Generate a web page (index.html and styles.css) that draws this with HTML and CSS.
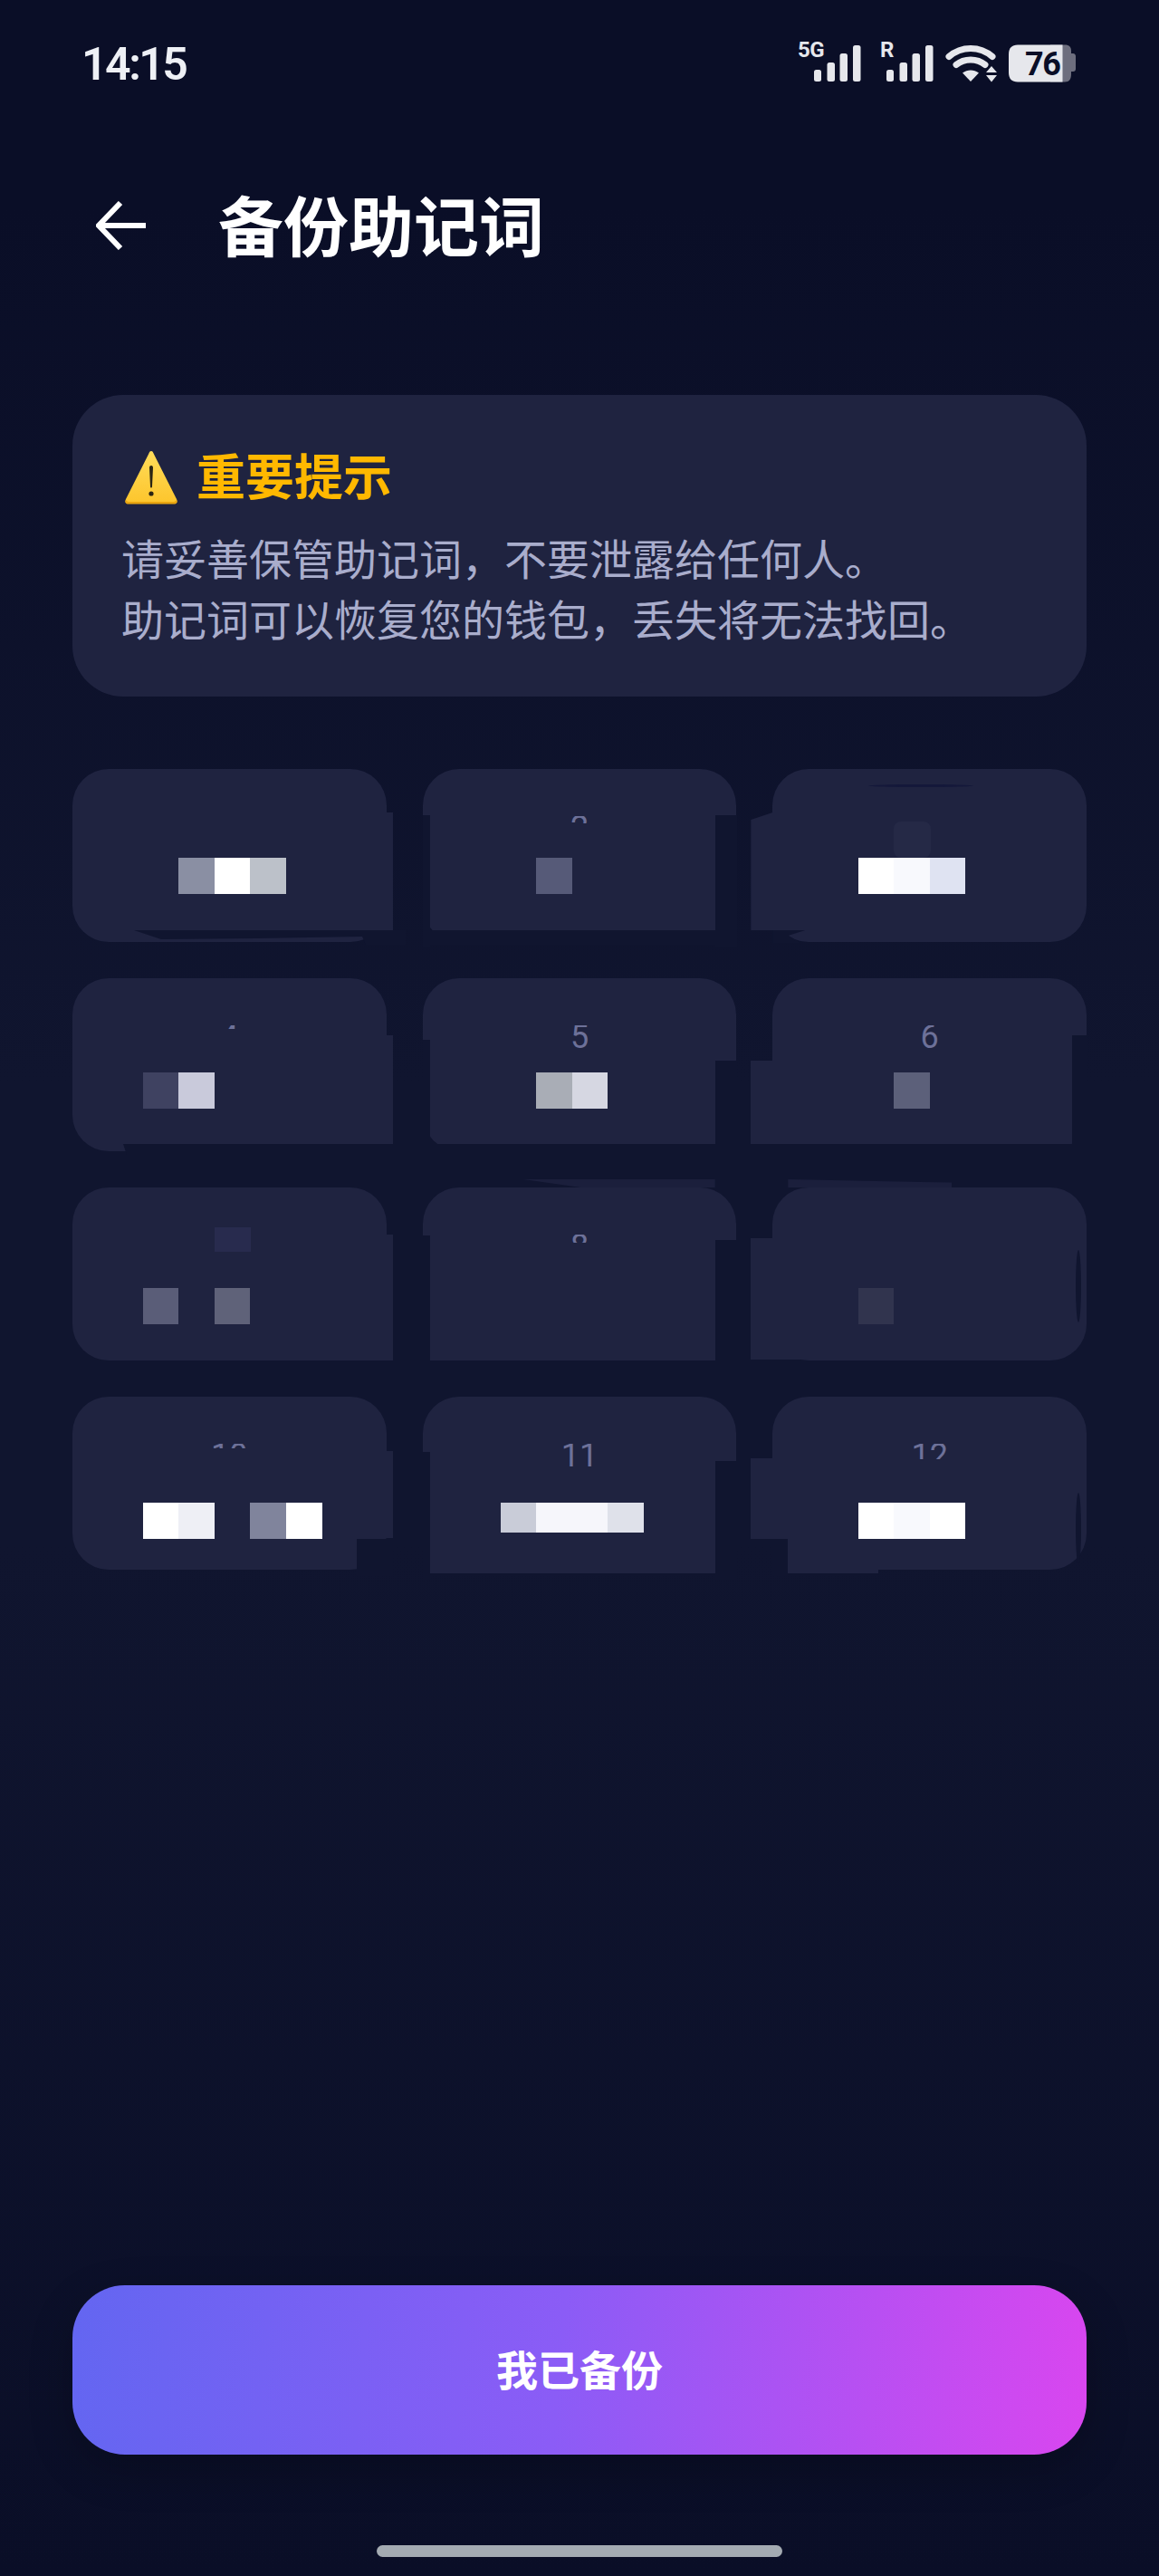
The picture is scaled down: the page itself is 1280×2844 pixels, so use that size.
FILE: index.html
```html
<!DOCTYPE html>
<html lang="zh-CN">
<head>
<meta charset="utf-8">
<title>备份助记词</title>
<link rel="stylesheet" href="styles.css">
</head>
<body>
<div class="page">
  <div class="status">
    <div class="time">14:15</div>
    <svg class="status-icons" width="320" height="60" viewBox="880 40 320 60">
      <text class="net" x="881" y="63">5G</text>
      <rect class="bar" x="899" y="77" width="8" height="13" rx="2.5"/>
      <rect class="bar" x="913.500" y="69" width="8.500" height="21" rx="2.500"/>
      <rect class="bar" x="927.500" y="59" width="8.500" height="31" rx="2.500"/>
      <rect class="bar" x="942" y="50" width="8.500" height="40" rx="2.500"/>
      <text class="net" x="972" y="63">R</text>
      <rect class="bar" x="979" y="77" width="8" height="13" rx="2.500"/>
      <rect class="bar" x="993.500" y="69" width="8.500" height="21" rx="2.500"/>
      <rect class="bar" x="1007.500" y="59" width="8.500" height="31" rx="2.500"/>
      <rect class="bar" x="1022" y="50" width="8.500" height="40" rx="2.500"/>
      <path class="wifi" d="M1048 62.500C1062 50.500 1082 50.500 1096 62.500M1056 71.500C1065 64 1079 64 1088 71.500"/>
      <path class="fill" d="M1063 80.500C1068.500 76.500 1075.500 76.500 1081 80.500L1072 90Z"/>
      <path class="fill" d="M1095 73L1101 80H1089ZM1089 83H1101L1095 90.500Z"/>
      <path class="batt-back" d="M1160 49.500H1176C1181 49.500 1183 52 1183 56V59H1185C1187 59 1188 60.500 1188 62V76C1188 78 1187 79 1185 79H1183V82C1183 87 1181 90.500 1176 90.500H1160Z"/>
      <path class="fill" d="M1124 49.500H1173.500V90.500H1124C1117.500 90.500 1114 87 1114 80V60C1114 53 1117.500 49.500 1124 49.500Z"/>
      <text class="batt" x="1132" y="83">76</text>
    </svg>
  </div>

  <header class="header">
    <svg class="back" width="56" height="54" viewBox="0 0 56 54">
      <path d="M27 2L3 27L27 52M3 27H55"/>
    </svg>
    <h1 class="title">备份助记词</h1>
  </header>

  <section class="notice">
    <div class="notice-head">
      <svg class="warn" width="60" height="60" viewBox="0 0 60 60">
        <defs>
          <linearGradient id="warnfill" x1="0" y1="0" x2="0" y2="1">
            <stop offset="0" stop-color="#ffdc5a"/>
            <stop offset="1" stop-color="#fdc52c"/>
          </linearGradient>
        </defs>
        <path d="M30 1C31.500 1 32 2 33 4.500L58 54C59.500 57.500 58.500 59 55 59H5C1.500 59 .5 57.500 2 54L27 4.500C28 2 28.500 1 30 1Z" fill="url(#warnfill)"/>
        <path d="M2 55C.8 57.800 1.800 59.500 5 59.500H55C58.200 59.500 59.200 57.800 58 55C57 56.500 56 57 54 57H6C4 57 3 56.500 2 55Z" fill="#e9a510"/>
        <path d="M30 17C31.500 17 32 18 32 19.500L31 40C31 41 30.500 41.500 30 41.500C29.500 41.500 29 41 29 40L28 19.500C28 18 28.500 17 30 17Z" fill="#2a2413"/>
        <circle cx="30" cy="48" r="2.600" fill="#2a2413"/>
      </svg>
      <h2 class="notice-title">重要提示</h2>
    </div>
    <p class="notice-body">请妥善保管助记词，不要泄露给任何人。<br>助记词可以恢复您的钱包，丢失将无法找回。</p>
  </section>

  <section class="grid">
    <div class="tile col1 row1">
      <div class="num"><div class="clip c0">1</div></div>
      <div class="word"><i class="b"></i><i class="b s8a8fa3"></i><i class="b sfff"></i><i class="b sbcc1c9"></i></div>
      <i class="p l ext-r t1e"></i>
      <i class="p d t1d"></i>
    </div>
    <div class="tile col2 row1">
      <div class="num"><div class="clip c8">2</div></div>
      <div class="word"><i class="b"></i><i class="b s565a78"></i></div>
      <i class="p d strip-l t2l"></i>
      <i class="p d strip-r t2r"></i>
      <i class="p d wide t2b"></i>
    </div>
    <div class="tile col3 row1">
      <div class="num"><div class="clip c0">3</div></div>
      <div class="word"><i class="b sfff"></i><i class="b sf8f9fd"></i><i class="b sdfe3f2"></i></div>
      <i class="p faint t3f"></i>
      <i class="p line t3n"></i>
      <i class="p l ext-l t3e"></i>
      <i class="p d t3d"></i>
    </div>

    <div class="tile col1 row2">
      <div class="num"><div class="clip c4">4</div></div>
      <div class="word"><i class="b s3f4261"></i><i class="b sc9cadb"></i></div>
      <i class="p l ext-r t4e"></i>
      <i class="p d t4d"></i>
    </div>
    <div class="tile col2 row2">
      <div class="num"><div class="clip">5</div></div>
      <div class="word"><i class="b"></i><i class="b sa9adb6"></i><i class="b sd6d7e2"></i></div>
      <i class="p d strip-l t5l"></i>
      <i class="p d strip-r t5r"></i>
      <i class="p d wide t5b"></i>
    </div>
    <div class="tile col3 row2">
      <div class="num"><div class="clip">6</div></div>
      <div class="word"><i class="b"></i><i class="b s5c607a"></i></div>
      <i class="p d t6r"></i>
      <i class="p l ext-l t6e"></i>
      <i class="p d wide t5b"></i>
    </div>

    <div class="tile col1 row3">
      <div class="num"><div class="clip c0">7</div></div>
      <div class="word"><i class="b s5a5d78"></i><i class="b"></i><i class="b s5f6279"></i></div>
      <i class="p faint t7f"></i>
      <i class="p l ext-r t7e"></i>
    </div>
    <div class="tile col2 row3">
      <div class="num"><div class="clip c9">8</div></div>
      <div class="word"></div>
      <i class="p l t8s"></i>
      <i class="p d strip-l t8l"></i>
      <i class="p d strip-r t8r"></i>
      <i class="p sliver t8v"></i>
    </div>
    <div class="tile col3 row3">
      <div class="num"><div class="clip c0">9</div></div>
      <div class="word"><i class="b s31344e"></i></div>
      <i class="p l ext-l t9e"></i>
      <i class="p sliver t9v"></i>
      <i class="p curve t9c"></i>
    </div>

    <div class="tile col1 row4">
      <div class="num"><div class="clip c5">10</div></div>
      <div class="word"><i class="b sfff"></i><i class="b seeeff5"></i><i class="b"></i><i class="b s80849c"></i><i class="b sfff"></i></div>
      <i class="p l ext-r t10e"></i>
      <i class="p d t10d"></i>
    </div>
    <div class="tile col2 row4">
      <div class="num"><div class="clip">11</div></div>
      <div class="word"><i class="b sc9ccd8"></i><i class="b sf6f6fb"></i><i class="b sf6f6fb"></i><i class="b sdfe1ea"></i></div>
      <i class="p l t11s"></i>
      <i class="p d strip-l t11l"></i>
      <i class="p d strip-r t11r"></i>
    </div>
    <div class="tile col3 row4">
      <div class="num"><div class="clip c17">12</div></div>
      <div class="word"><i class="b sfff"></i><i class="b sf8f9fd"></i><i class="b sfff"></i></div>
      <i class="p l ext-l t12e"></i>
      <i class="p l t12s"></i>
      <i class="p d t12d"></i>
      <i class="p curve t12c"></i>
    </div>
  </section>

  <button class="confirm" type="button"><span class="confirm-label">我已备份</span></button>
  <div class="home-bar"></div>
</div>
</body>
</html>
```

FILE: styles.css
```css
* { box-sizing: border-box; }

html, body {
  margin: 0;
  padding: 0;
}

body {
  font-family: "Noto Sans CJK SC", "Noto Sans", Roboto, sans-serif;
  background: #0a0e27;
}

.page {
  width: 1280px;
  height: 2844px;
  display: flex;
  flex-direction: column;
  overflow: hidden;
  background: linear-gradient(180deg, #0a0e27 0%, #0a0e27 8%, #10152f 42%, #10152f 60%, #0a0e27 100%);
}

/* status bar */
.status {
  height: 203px;
  padding: 40px 80px 0 90px;
  display: flex;
  justify-content: space-between;
  align-items: flex-start;
}

.time {
  margin-top: 3px;
  font-family: Roboto, sans-serif;
  font-size: 50px;
  font-weight: 600;
  line-height: 56px;
  letter-spacing: -2.500px;
  color: #eef0f5;
}

.status-icons {
  display: block;
  overflow: visible;
}

.net {
  font-family: Roboto, sans-serif;
  font-size: 24px;
  font-weight: 700;
  fill: #e6e7ec;
  letter-spacing: -.5px;
}

.bar, .fill { fill: #e6e7ec; }

.wifi {
  fill: none;
  stroke: #e6e7ec;
  stroke-width: 7px;
  stroke-linecap: round;
}

.batt-back { fill: #6d6e7e; }

.batt {
  font-family: Roboto, sans-serif;
  font-size: 36px;
  font-weight: 700;
  fill: #0a0e27;
  letter-spacing: -1.500px;
}

/* header */
.header {
  height: 92px;
  padding-left: 106px;
  display: flex;
  align-items: center;
  gap: 79px;
}

.back {
  display: block;
  fill: none;
  stroke: #fff;
  stroke-width: 6px;
}

.title {
  margin: 0 0 6px;
  font-size: 72px;
  font-weight: 700;
  line-height: 86px;
  color: #fff;
}

/* notice card */
.notice {
  margin: 141px 80px 0;
  padding: 61px 54px 50px;
  height: 333px;
  background: #1f2340;
  border-radius: 56px;
}

.notice-head {
  display: flex;
  align-items: center;
  gap: 20px;
  height: 60px;
  padding-left: 3px;
  margin-bottom: 24px;
}

.warn { display: block; flex: none; }

.notice-title {
  margin: 0 0 6px;
  font-size: 54px;
  font-weight: 700;
  line-height: 56px;
  color: #ffb800;
}

.notice-body {
  margin: 0;
  font-size: 47px;
  line-height: 67px;
  color: #a9adcc;
  white-space: nowrap;
}

/* word grid */
.grid {
  margin: 80px 80px 0;
  display: grid;
  grid-template-columns: repeat(3, 1fr);
  grid-auto-rows: 191px;
  gap: 40px;
}

.tile {
  position: relative;
  background: #1f2340;
  border-radius: 40px;
  padding-top: 52px;
}

.num {
  height: 27px;
  display: flex;
  justify-content: center;
  font-family: Roboto, sans-serif;
  font-size: 36px;
  line-height: 27px;
  color: #6d7199;
}

.clip { height: 27px; overflow: hidden; }
.c0 { height: 0; }
.c4 { height: 4px; }
.c5 { height: 5px; }
.c8 { height: 8px; }
.c9 { height: 9px; }
.c17 { height: 17px; }

.word {
  display: flex;
  height: 40px;
}

.b { display: block; flex: none; width: 39.600px; height: 40px; }

.col1 .word { padding-left: 77.600px; }
.col2 .word { padding-left: 86px; }
.col3 .word { padding-left: 94.300px; }

.row1 .word { margin-top: 19px; }
.row2 .word { margin-top: 25px; }
.row3 .word { margin-top: 32px; }
.row4 .word { margin-top: 38px; }

.sfff { background: #fff; }
.s8a8fa3 { background: #8a8fa3; }
.sbcc1c9 { background: #bcc1c9; }
.s565a78 { background: #565a78; }
.sf8f9fd { background: #f8f9fd; }
.sdfe3f2 { background: #dfe3f2; }
.s3f4261 { background: #3f4261; }
.sc9cadb { background: #c9cadb; }
.sa9adb6 { background: #a9adb6; }
.sd6d7e2 { background: #d6d7e2; }
.s5c607a { background: #5c607a; }
.s5a5d78 { background: #5a5d78; }
.s5f6279 { background: #5f6279; }
.s31344e { background: #31344e; }
.seeeff5 { background: #eeeff5; }
.s80849c { background: #80849c; }
.sc9ccd8 { background: #c9ccd8; }
.sf6f6fb { background: #f6f6fb; }
.sdfe1ea { background: #dfe1ea; }

/* compression smears lying over the tiles */
.p { position: absolute; display: block; }
.l { background: #1f2340; }
.d { background: #10152f; }
.faint { background: #282b4e; }
.line { background: #14183a; border-radius: 50%; }
.sliver { background: #1b1f3c; clip-path: polygon(0 0, 100% 0, 100% 100%, 60% 100%, 30% 100%); }
.curve { background: #10152f; border-radius: 50%; }

.ext-r { left: 294px; width: 60px; }
.ext-l { left: -24px; width: 66px; }
.strip-l { left: 0; width: 8px; }
.strip-r { left: 323.500px; width: 24px; }
.wide { left: 0; width: 347px; }

.t1e { top: 48px; height: 130px; }
.t1d { left: 68px; top: 178px; width: 300px; height: 16px; clip-path: polygon(0 0, 100% 0, 100% 100%, 256px 100%, 252px 7px, 134px 9px, 30px 10px); }

.t2l { top: 51px; height: 145px; }
.t2r { top: 51px; height: 145px; }
.t2b { top: 178px; height: 16px; }

.t3f { left: 133.500px; top: 58px; width: 41px; height: 40px; border-radius: 8px; background: #252946; }
.t3n { left: 106px; top: 17px; width: 116px; height: 3px; }
.t3e { top: 48px; height: 130px; clip-path: polygon(0 8px, 24px 0, 100% 0, 100% 100%, 0 100%); }
.t3d { left: 0; top: 178px; width: 36px; height: 14px; clip-path: polygon(0 0, 100% 0, 17px 6px, 31px 100%, 0 100%); }

.t4e { top: 63px; height: 120px; }
.t4d { left: 56px; top: 183px; width: 312px; height: 12px; clip-path: polygon(0 0, 100% 0, 100% 100%, 4px 100%); }

.t5l { top: 68px; height: 130px; }
.t5r { top: 91px; height: 105px; }
.t5b { top: 183px; height: 12px; }

.t6r { left: 331px; top: 63px; width: 16px; height: 130px; }
.t6e { top: 91px; height: 92px; }

.t7f { left: 157px; top: 44px; width: 40px; height: 27px; }
.t7e { top: 52px; height: 139px; }

.t8s { left: 8px; top: 150px; width: 316px; height: 41px; }
.t8l { top: 53px; height: 145px; }
.t8r { top: 58px; height: 145px; }
.t8v { left: 111px; top: -9px; width: 212px; height: 9px; }

.t9e { top: 56px; height: 134px; }
.t9v { left: 17px; top: -9px; width: 181px; height: 9px; clip-path: polygon(0 0, 100% 40%, 100% 100%, 0 100%); }
.t9c { left: 335px; top: 69px; width: 6px; height: 80px; }

.t10e { top: 60px; height: 96px; }
.t10d { left: 314px; top: 157px; width: 40px; height: 40px; }

.t11s { left: 8px; top: 150px; width: 316px; height: 45px; }
.t11l { top: 61px; height: 140px; }
.t11r { top: 71px; height: 130px; }

.t12e { top: 68px; height: 89px; }
.t12s { left: 17px; top: 157px; width: 100px; height: 38px; }
.t12d { left: 0; top: 157px; width: 17px; height: 40px; }
.t12c { left: 335px; top: 106px; width: 6px; height: 80px; }

/* bottom */
.confirm {
  margin: auto 80px 0;
  height: 187px;
  border: 0;
  border-radius: 58px;
  background: linear-gradient(95deg, #6366f1 0%, #8b5cf6 48%, #d946ef 100%);
  box-shadow: 0 16px 48px rgba(0, 0, 0, .22);
  font-family: inherit;
  font-size: 46px;
  font-weight: 700;
  color: #fff;
}

.confirm-label {
  display: block;
  margin-bottom: 6px;
}

.home-bar {
  width: 448px;
  height: 13px;
  margin: 100px auto 21px;
  background: #a4abb2;
  border-radius: 6.500px;
}
```
